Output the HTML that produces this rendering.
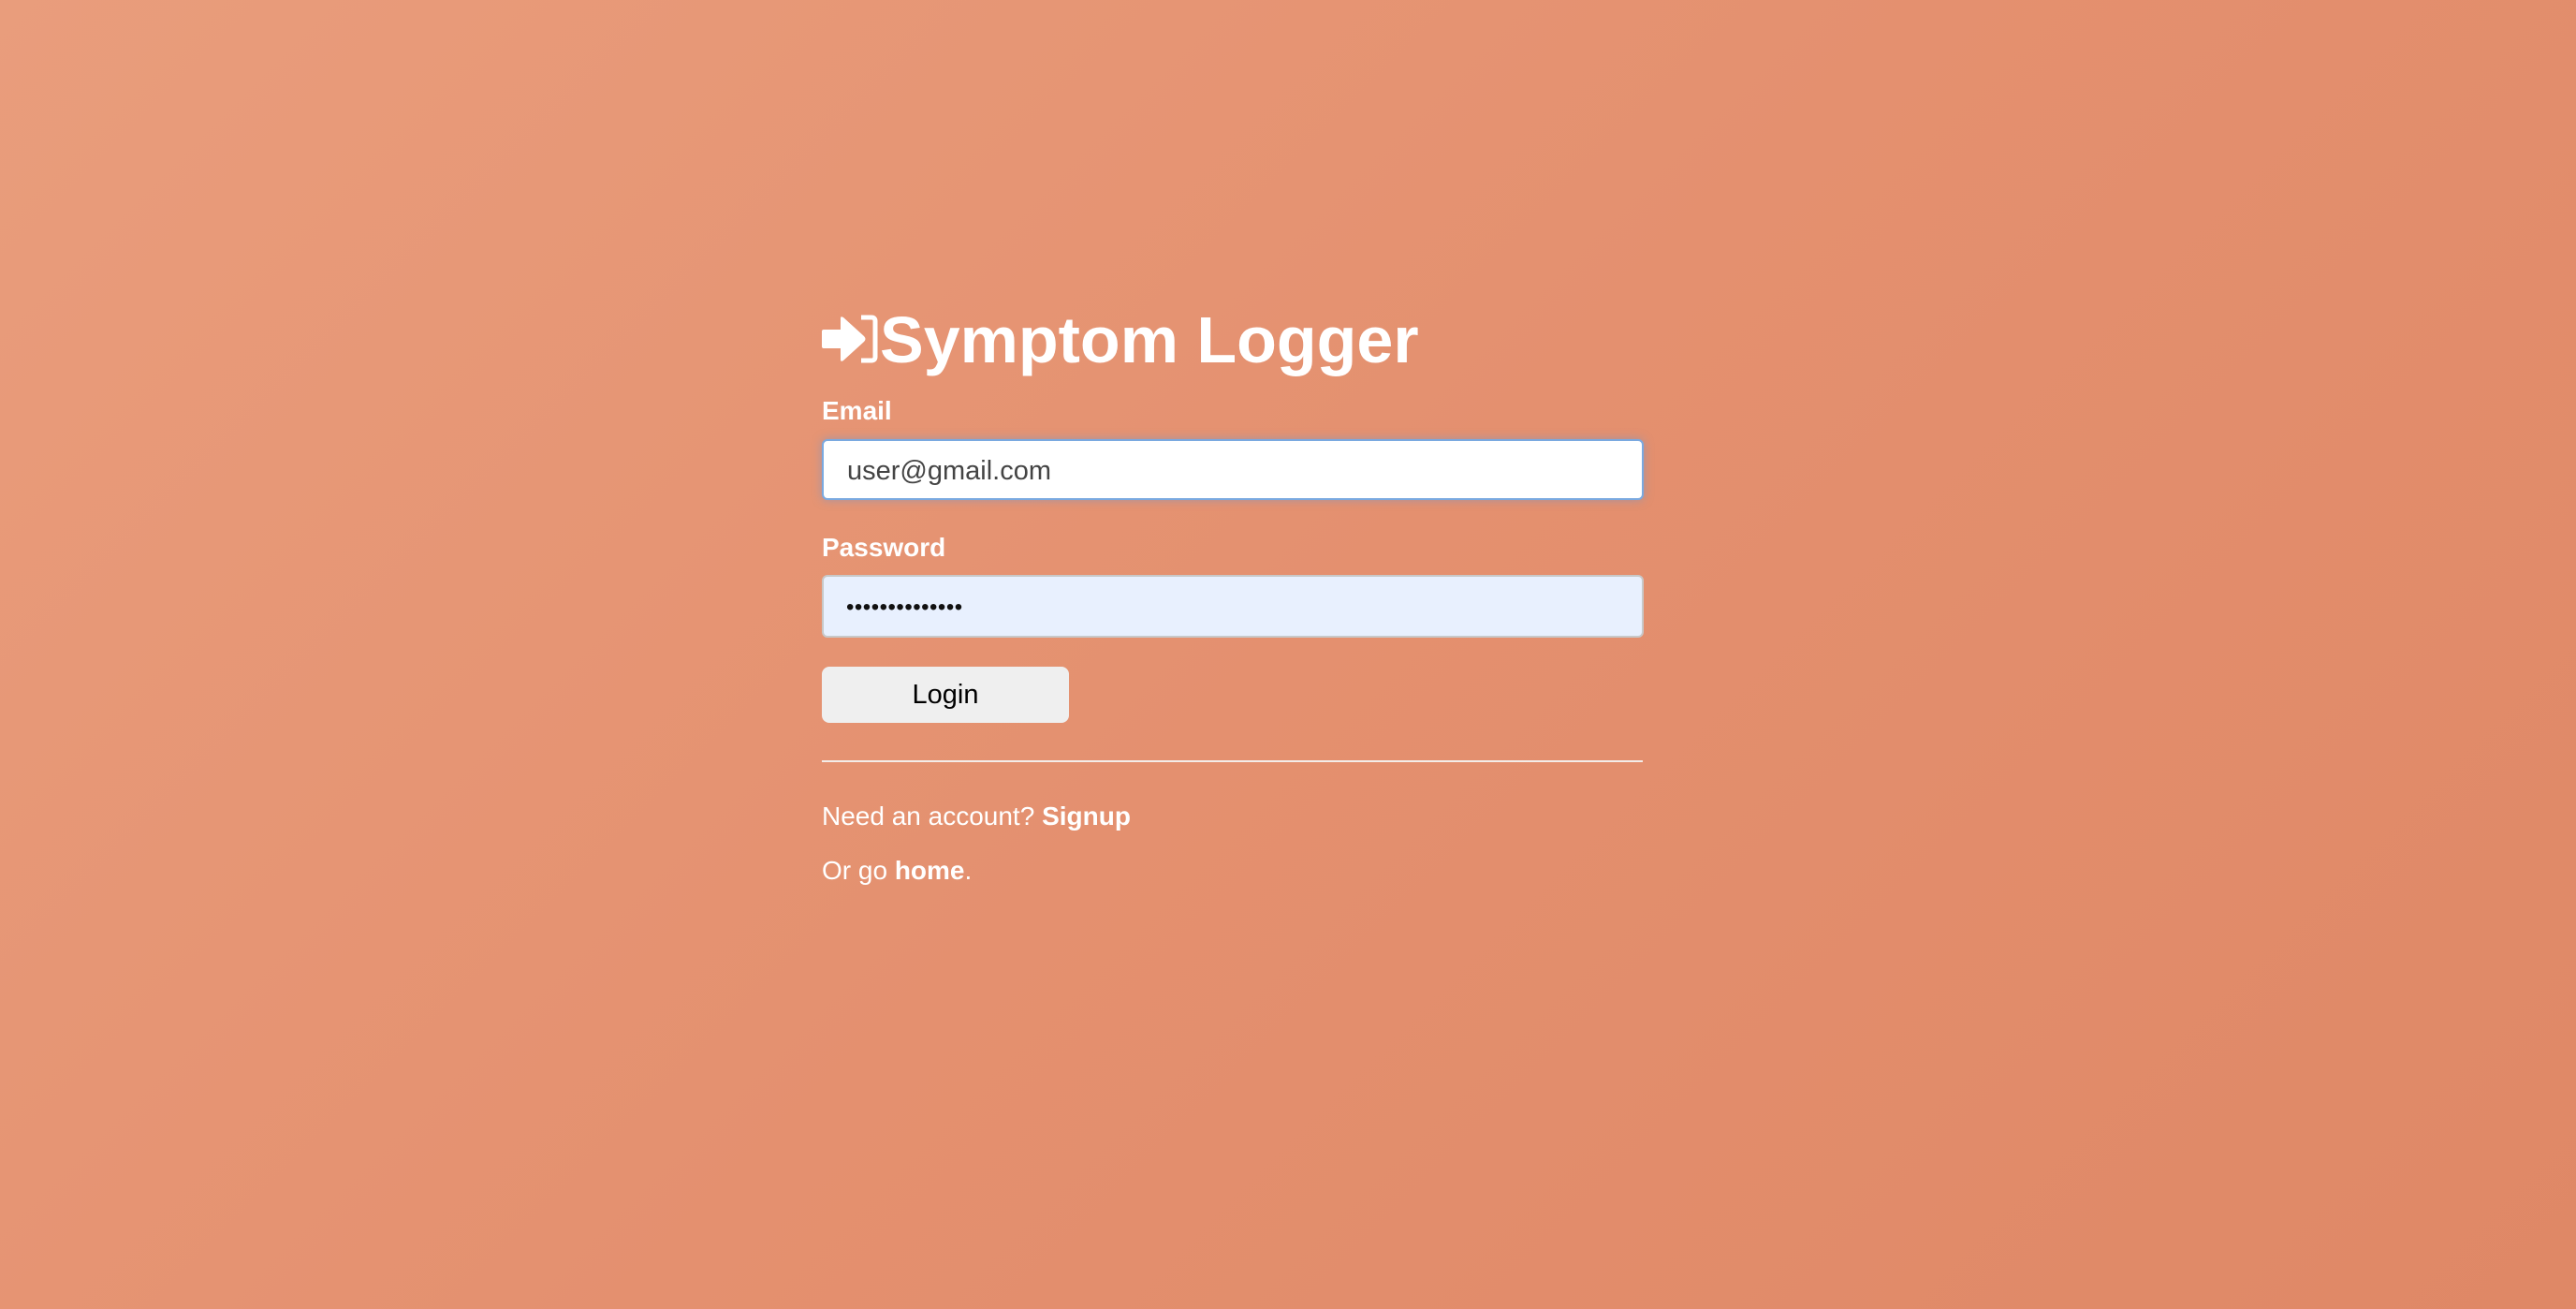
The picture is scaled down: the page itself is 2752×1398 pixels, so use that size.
<!DOCTYPE html>
<html><head><style>
html,body{margin:0;padding:0}
body{width:2752px;height:1398px;overflow:hidden;background:linear-gradient(135deg,#e99d7c 0%,#e4906f 50%,#df8866 100%);font-family:"Liberation Sans",Arial,sans-serif;position:relative}
.abs{position:absolute}
h1{position:absolute;left:940px;top:323px;margin:0;font-size:70px;font-weight:bold;color:#fff;line-height:80px;letter-spacing:0px}
.lbl{position:absolute;left:878px;font-size:28px;font-weight:bold;color:#fff;line-height:32px}
.inp{position:absolute;left:878px;width:878px;box-sizing:border-box;border-radius:6px;font-size:29px;line-height:30px}
.btn{position:absolute;left:878px;top:712px;width:264px;height:60px;background:#efefef;border-radius:8px;font-size:29px;text-align:center;line-height:60px;color:#000}
.txt{position:absolute;left:878px;font-size:28px;color:#fff;line-height:32px}
b{font-weight:bold}
</style></head><body>
<svg class="abs" style="left:876px;top:335px" width="64" height="54" viewBox="0 0 64 54">
<path d="M4 17 H22 V5 Q22 2 25 4 L47 24 Q50 27 47 30 L25 50 Q22 52 22 49 V37 H4 Q2 37 2 35 V19 Q2 17 4 17 Z" fill="#fff"/>
<path d="M44 4 H55 Q59 4 59 8 V46 Q59 50 55 50 H44" fill="none" stroke="#fff" stroke-width="5"/>
</svg>
<h1>Symptom Logger</h1>
<div class="lbl" style="top:423px">Email</div>
<div class="inp" style="top:469px;height:65px;background:#fff;border:2px solid #7aa9e0;box-shadow:0 0 10px rgba(120,150,200,0.6);padding:17px 0 0 25px;color:#444">user@gmail.com</div>
<div class="lbl" style="top:569px">Password</div>
<div class="inp" style="top:614px;height:67px;background:#e8f0fe;border:2px solid #c8c8c8;padding:18px 0 0 24px;color:#111;font-size:24px;letter-spacing:0.5px">••••••••••••••</div>
<div class="btn">Login</div>
<div class="abs" style="left:878px;top:812px;width:877px;height:2px;background:#f3ece8"></div>
<div class="txt" style="top:856px">Need an account? <b>Signup</b></div>
<div class="txt" style="top:914px">Or go <b>home</b>.</div>
</body></html>
